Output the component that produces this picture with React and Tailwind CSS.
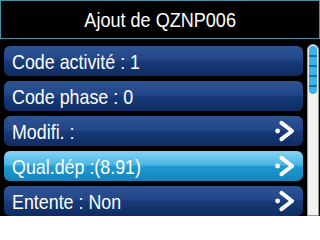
import React from "react";

const rows = [
  { label: "Code activité : 1", arrow: false, active: false },
  { label: "Code phase : 0", arrow: false, active: false },
  { label: "Modifi. :", arrow: true, active: false },
  { label: "Qual.dép :(8.91)", arrow: true, active: true },
  { label: "Entente : Non", arrow: true, active: false },
];

function Arrow() {
  return (
    <svg width="20" height="22" viewBox="0 0 20 22" className="shrink-0">
      <circle cx="2.6" cy="11" r="2.4" fill="#ffffff" />
      <polyline
        points="6.5,2.8 17,11 6.5,19.2"
        fill="none"
        stroke="#ffffff"
        strokeWidth="4"
        strokeLinecap="round"
        strokeLinejoin="round"
      />
    </svg>
  );
}

export default function App() {
  return (
    <div
      className="w-[320px] h-[216px] bg-black overflow-hidden flex flex-col text-white"
      style={{ fontFamily: '"Liberation Sans", Arial, sans-serif' }}
    >
      <div className="h-[39px] shrink-0 border border-[#4a90a4] flex items-center justify-center text-[21px] leading-none">
        <span className="inline-block whitespace-nowrap scale-x-[0.86] origin-center">Ajout de QZNP006</span>
      </div>
      <div className="flex flex-1 min-h-0">
        <div className="w-[303px] pl-[4px] pt-[7px] flex flex-col gap-[5px]">
          {rows.map((r) => (
            <div
              key={r.label}
              className={
                "h-[30px] shrink-0 rounded-[6px] flex items-center justify-between pl-[8px] pr-[8px] text-[21px] leading-none " +
                (r.active
                  ? "bg-[linear-gradient(to_bottom,#86d4f4_0%,#4cb6e4_45%,#1f9ad2_52%,#1782bc_100%)]"
                  : "bg-[linear-gradient(to_bottom,#2f5492_0%,#22468a_45%,#173a78_52%,#0f2c62_100%)]")
              }
            >
              <span className="inline-block whitespace-nowrap scale-x-[0.85] origin-left">{r.label}</span>
              {r.arrow && <Arrow />}
            </div>
          ))}
        </div>
        <div className="ml-[4px] mt-[5px] w-[12px] rounded-t-full border border-[#9a9a9a] bg-[#f2f2f2] p-[1px] pb-0">
          <div className="h-[48px] rounded-full bg-[#3ab2ea] flex flex-col justify-center gap-[8px] items-center pt-[2px]">
            <div className="h-[2px] w-[8px] bg-[#1b6e9e]" />
            <div className="h-[2px] w-[8px] bg-[#1b6e9e]" />
            <div className="h-[2px] w-[8px] bg-[#1b6e9e]" />
            <div className="h-[2px] w-[8px] bg-[#1b6e9e]" />
          </div>
        </div>
      </div>
    </div>
  );
}
